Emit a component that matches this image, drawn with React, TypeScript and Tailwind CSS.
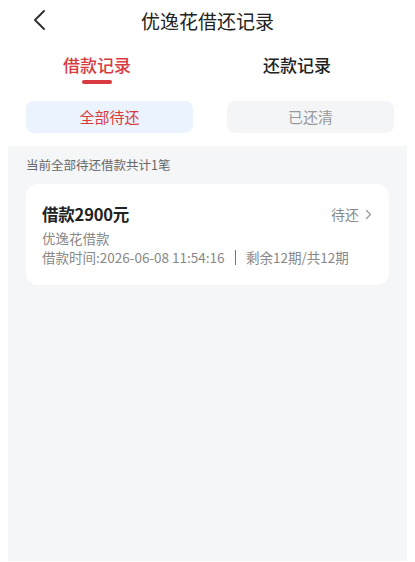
const font = { fontFamily: '"Noto Sans CJK SC", "Noto Sans", sans-serif' };

const BackIcon = () => (
  <svg width="14" height="22" viewBox="0 0 14 22" fill="none">
    <path d="M12 2 L3 11 L12 20" stroke="#333" strokeWidth="2" strokeLinecap="round" strokeLinejoin="round" />
  </svg>
);

const SmallChevron = () => (
  <svg width="7" height="11" viewBox="0 0 7 11" fill="none">
    <path d="M1.5 1.5 L5.5 5.5 L1.5 9.5" stroke="#999" strokeWidth="1.3" strokeLinecap="round" strokeLinejoin="round" />
  </svg>
);

export default function App() {
  return (
    <main className="w-[415px] h-[562px] bg-white overflow-hidden" style={font}>
      <header className="relative h-[40px] flex items-center justify-center">
        <button className="absolute left-[32px] top-[9px]">
          <BackIcon />
        </button>
        <h1 className="text-[19px] leading-[26px] text-[#222] pt-[1px]">优逸花借还记录</h1>
      </header>

      <nav className="flex pl-[30px] gap-[66px] pt-[13px]">
        <div className="w-[134px] flex flex-col items-center">
          <span className="text-[17px] leading-[24px] font-medium text-[#d93a40]">借款记录</span>
          <div className="mt-[3px] w-[30px] h-[4px] rounded-full bg-[#d93a40]" />
        </div>
        <div className="w-[134px] flex flex-col items-center">
          <span className="text-[17px] leading-[24px] font-medium text-[#222]">还款记录</span>
        </div>
      </nav>

      <div className="flex pl-[26px] gap-[34px] mt-[17px]">
        <button className="w-[167px] h-[32px] rounded-[8px] bg-[#ebf3fe] text-[15px] text-[#d93a40]">
          全部待还
        </button>
        <button className="w-[167px] h-[32px] rounded-[8px] bg-[#f4f5f7] text-[15px] text-[#999]">
          已还清
        </button>
      </div>

      <section className="mt-[13px] mx-[8px] h-[415px] bg-[#f5f6f8] px-[18px] pt-[10px]">
        <p className="text-[12.5px] leading-[18px] text-[#666]">当前全部待还借款共计1笔</p>
        <div className="mt-[10px] h-[101px] rounded-[12px] bg-white px-[16px] pt-[18px]">
          <div className="flex items-center justify-between h-[24px]">
            <span className="text-[16.5px] font-semibold tracking-[-0.2px] text-[#222]">借款2900元</span>
            <span className="flex items-center gap-[6px] text-[14px] text-[#888] pr-[1px]">
              待还
              <SmallChevron />
            </span>
          </div>
          <p className="mt-[2px] text-[13.5px] leading-[20px] text-[#888]">优逸花借款</p>
          <p className="flex items-center text-[13.5px] leading-[18px] text-[#888]">
            借款时间:2026-06-08 11:54:16
            <span className="mx-[10px] w-[1.5px] h-[15px] bg-[#777]" />
            剩余12期/共12期
          </p>
        </div>
      </section>
    </main>
  );
}
